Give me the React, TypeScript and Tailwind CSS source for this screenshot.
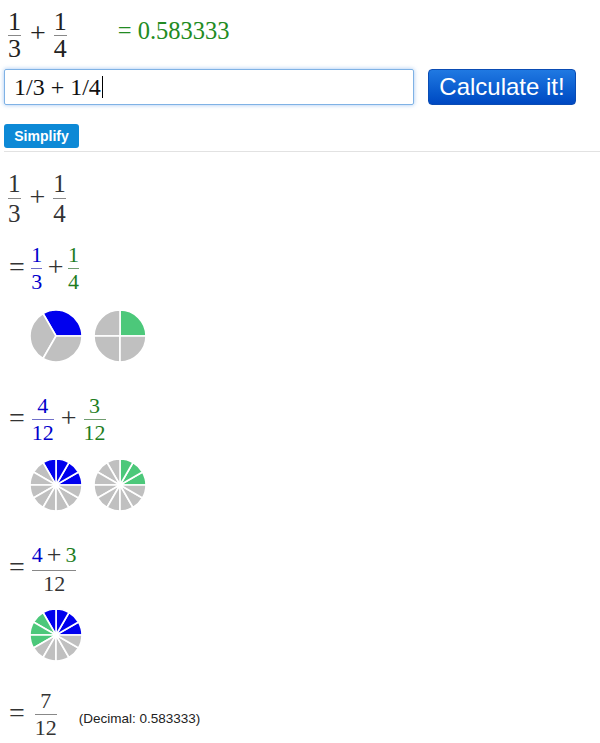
import React from 'react';

const BLUE = '#0000ee';
const GREEN = '#4cc87a';
const GRAY = '#c0c0c0';

interface PieProps {
    colors: string[];
}

// slices start at 3 o'clock and run counter-clockwise
const Pie: React.FC<PieProps> = ({ colors }) => {
    const r = 26;
    const c = 26;
    const n = colors.length;
    const pt = (a: number) => {
        const rad = (a * Math.PI) / 180;
        return `${(c + r * Math.cos(rad)).toFixed(2)} ${(c - r * Math.sin(rad)).toFixed(2)}`;
    };
    return (
        <svg width="52" height="52" viewBox="0 0 52 52" className="block">
            {colors.map((col, i) => {
                const a0 = (i * 360) / n;
                const a1 = ((i + 1) * 360) / n;
                const d = `M ${c} ${c} L ${pt(a0)} A ${r} ${r} 0 0 0 ${pt(a1)} Z`;
                return <path key={i} d={d} fill={col} stroke="#fff" strokeWidth="1.6" strokeLinejoin="round" />;
            })}
        </svg>
    );
};

interface FracProps {
    num: React.ReactNode;
    den: React.ReactNode;
    className?: string;
    numClass?: string;
    denClass?: string;
    barClass?: string;
}

const Frac: React.FC<FracProps> = ({ num, den, className = '', numClass = '', denClass = '', barClass = '' }) => (
    <span className={`inline-flex flex-col items-center ${className}`}>
        <span className={`flex items-center ${numClass}`}>{num}</span>
        <span className={`self-stretch h-px ${barClass}`} />
        <span className={denClass}>{den}</span>
    </span>
);

const fill = (n: number, parts: [string, number][]) => {
    const out: string[] = [];
    parts.forEach(([col, k]) => {
        for (let i = 0; i < k; i++) out.push(col);
    });
    while (out.length < n) out.push(GRAY);
    return out;
};

const App: React.FC = () => {
    return (
        <div className="w-[600px] min-h-[743px] bg-white pl-[4px] font-['Liberation_Serif',serif] text-[#333]">
            {/* header result */}
            <div className="flex items-center pt-[9px] ml-[4px] text-[#222]">
                <Frac num="1" den="3" className="text-[26px] leading-none" barClass="bg-[#888]" />
                <span className="ml-[9px] mb-[5px] text-[28px] leading-none">+</span>
                <Frac num="1" den="4" className="ml-[8px] text-[26px] leading-none" barClass="bg-[#888]" />
                <span className="ml-[51px] mb-[8px] text-[24.5px] leading-none text-[#228b22]">= 0.583333</span>
            </div>

            {/* input row */}
            <div className="flex mt-[7px] h-[36px]">
                <div className="w-[410px] h-full border border-[#7fb2e5] rounded-[2px] shadow-[0_0_4px_rgba(82,150,230,0.55)] pl-[9px] text-[24px] leading-[34px] text-[#111] flex items-center">
                    <span>1/3 + 1/4</span>
                    <span className="w-px h-[22px] bg-black ml-px" />
                </div>
                <button className="ml-[14px] w-[148px] h-full rounded-[4px] border border-[#0a4cb4] bg-gradient-to-b from-[#2079e2] to-[#0048c2] text-white text-[24px] leading-none font-['Liberation_Sans',Arial,sans-serif]">
                    Calculate it!
                </button>
            </div>

            <button className="mt-[19px] w-[75px] h-[24px] rounded-[3px] bg-[#0d89d6] text-white text-[14px] font-bold leading-none font-['Liberation_Sans',Arial,sans-serif]">
                Simplify
            </button>

            <div className="mt-[3px] border-t border-[#e2e2e2]" />

            {/* step 1 */}
            <div className="flex items-center mt-[19px] ml-[4px] text-[#333]">
                <Frac
                    num="1"
                    den="3"
                    className="text-[25px] leading-none"
                    numClass="pb-[2px]"
                    denClass="pt-[2px]"
                    barClass="bg-[#888]"
                />
                <span className="ml-[9px] mb-[4px] text-[28px] leading-none">+</span>
                <Frac
                    num="1"
                    den="4"
                    className="ml-[8px] text-[25px] leading-none"
                    numClass="pb-[2px]"
                    denClass="pt-[2px]"
                    barClass="bg-[#888]"
                />
            </div>

            {/* step 2 */}
            <div className="flex items-center mt-[18px] ml-[5px]">
                <span className="mb-[4px] text-[28px] leading-none">=</span>
                <Frac
                    num="1"
                    den="3"
                    className="ml-[6px] px-[0.5px] text-[22px] leading-none text-[#0000cc]"
                    numClass="pb-[2px]"
                    denClass="pt-[2px]"
                    barClass="bg-[#6f6fc8]"
                />
                <span className="ml-[5px] mb-[4px] text-[28px] leading-none">+</span>
                <Frac
                    num="1"
                    den="4"
                    className="ml-[4px] px-[0.5px] text-[22px] leading-none text-[#1e7d1e]"
                    numClass="pb-[2px]"
                    denClass="pt-[2px]"
                    barClass="bg-[#6f9c6f]"
                />
            </div>
            <div className="flex gap-[12px] mt-[17px] ml-[26px]">
                <Pie colors={fill(3, [[BLUE, 1]])} />
                <Pie colors={fill(4, [[GREEN, 1]])} />
            </div>

            {/* step 3 */}
            <div className="flex items-center mt-[33px] ml-[5px]">
                <span className="mb-[4px] text-[28px] leading-none">=</span>
                <Frac
                    num="4"
                    den="12"
                    className="ml-[6px] px-[1px] text-[22px] leading-none text-[#0000cc]"
                    numClass="pb-[2px]"
                    denClass="pt-[2px]"
                    barClass="bg-[#6f6fc8]"
                />
                <span className="ml-[6px] mb-[4px] text-[28px] leading-none">+</span>
                <Frac
                    num="3"
                    den="12"
                    className="ml-[6px] px-[1px] text-[22px] leading-none text-[#1e7d1e]"
                    numClass="pb-[2px]"
                    denClass="pt-[2px]"
                    barClass="bg-[#6f9c6f]"
                />
            </div>
            <div className="flex gap-[12px] mt-[15px] ml-[26px]">
                <Pie colors={fill(12, [[BLUE, 4]])} />
                <Pie colors={fill(12, [[GREEN, 3]])} />
            </div>

            {/* step 4 */}
            <div className="flex items-center mt-[31px] ml-[5px]">
                <span className="mb-[4px] text-[28px] leading-none">=</span>
                <Frac
                    num={
                        <>
                            <span className="text-[#0000cc]">4</span>
                            <span className="mx-[4px] text-[26px]">+</span>
                            <span className="text-[#1e7d1e]">3</span>
                        </>
                    }
                    den="12"
                    className="ml-[6px] px-[1px] text-[22px] leading-none text-[#333]"
                    numClass="pb-[2px]"
                    denClass="pt-[2px]"
                    barClass="bg-[#888]"
                />
            </div>
            <div className="flex mt-[14px] ml-[26px]">
                <Pie colors={fill(12, [[BLUE, 4], [GREEN, 3]])} />
            </div>

            {/* step 5 */}
            <div className="flex items-center mt-[29px] ml-[5px]">
                <span className="mb-[4px] text-[28px] leading-none">=</span>
                <Frac
                    num="7"
                    den="12"
                    className="ml-[9px] px-[1px] text-[22px] leading-none text-[#333]"
                    numClass="pb-[2px]"
                    denClass="pt-[2px]"
                    barClass="bg-[#888]"
                />
                <span className="ml-[21px] mt-[8px] text-[13.5px] leading-none text-[#222] font-['Liberation_Sans',Arial,sans-serif]">
                    (Decimal: 0.583333)
                </span>
            </div>
        </div>
    );
};

export default App;
